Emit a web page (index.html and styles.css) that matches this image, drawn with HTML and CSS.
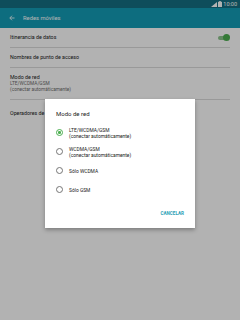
FILE: index.html
```html
<!DOCTYPE html>
<html lang="es">
<head>
  <meta charset="UTF-8">
  <meta name="viewport" content="width=device-width, initial-scale=1.0">
  <title>Redes móviles</title>
  <link rel="stylesheet" href="styles.css">
</head>
<body>
  <div id="screen">
    <div class="status-bar">
      <svg class="signal" width="6" height="5" viewBox="0 0 6 5"><path d="M6 0 L6 5 L0 5 Z" fill="#fff"/></svg>
      <svg class="battery" width="4" height="6" viewBox="0 0 4 6"><rect x="1.2" y="0" width="1.6" height="1" fill="#fff"/><rect x="0" y="0.8" width="4" height="5.2" fill="#fff"/></svg>
      <span class="clock">10:00</span>
    </div>

    <div class="toolbar">
      <svg class="back" width="6" height="6" viewBox="0 0 12 12"><path d="M11 6 H2 M6 1.5 L1.5 6 L6 10.5" stroke="#fff" stroke-width="1.6" fill="none"/></svg>
      <span class="toolbar-title">Redes móviles</span>
    </div>

    <div class="settings-list">
      <div class="setting-row">
        <span class="setting-name">Itinerancia de datos</span>
        <span class="switch"><span class="switch-knob"></span></span>
      </div>
      <div class="setting-row">
        <span class="setting-name">Nombres de punto de acceso</span>
      </div>
      <div class="setting-row tall">
        <div>
          <div class="setting-name">Modo de red</div>
          <div class="setting-sub">LTE/WCDMA/GSM</div>
          <div class="setting-sub">(conectar automáticamente)</div>
        </div>
      </div>
      <div class="setting-row">
        <span class="setting-name">Operadores de red</span>
      </div>
    </div>

    <div class="scrim"></div>

    <div class="dialog">
      <div class="dialog-title">Modo de red</div>
      <div class="options">
        <div class="option">
          <span class="radio checked"></span>
          <span class="option-text">LTE/WCDMA/GSM<br>(conectar automáticamente)</span>
        </div>
        <div class="option">
          <span class="radio"></span>
          <span class="option-text">WCDMA/GSM<br>(conectar automáticamente)</span>
        </div>
        <div class="option">
          <span class="radio"></span>
          <span class="option-text">Sólo WCDMA</span>
        </div>
        <div class="option">
          <span class="radio"></span>
          <span class="option-text">Sólo GSM</span>
        </div>
      </div>
      <div class="dialog-actions">
        <span class="cancel-btn">CANCELAR</span>
      </div>
    </div>
  </div>
</body>
</html>
```

FILE: styles.css
```css
body {
  margin: 0;
  padding: 0;
  font-family: Roboto, "Noto Sans", sans-serif;
  background-color: #fff;
}

#screen {
  position: relative;
  width: 240px;
  height: 320px;
  overflow: hidden;
  background-color: #fff;
}

.status-bar {
  height: 8px;
  background-color: #156f83;
  display: flex;
  align-items: center;
  justify-content: flex-end;
  gap: 1px;
  padding-right: 3px;
}

.clock {
  color: #fff;
  font-size: 5.5px;
  line-height: 8px;
}

.toolbar {
  height: 20px;
  background-color: #149db7;
  display: flex;
  align-items: center;
  padding-left: 9px;
  gap: 8px;
}

.toolbar-title {
  color: #fff;
  font-size: 5.8px;
}

.settings-list {
  padding: 0 10px;
}

.setting-row {
  height: 20px;
  border-bottom: 1px solid #dcdcdc;
  box-sizing: border-box;
  display: flex;
  align-items: center;
  justify-content: space-between;
  color: #212121;
}

.setting-row.tall {
  height: 32px;
}

.setting-row:last-child {
  border-bottom: none;
  height: 26px;
}

.setting-name {
  font-size: 5.3px;
  line-height: 7px;
}

.setting-sub {
  font-size: 4.8px;
  line-height: 5.8px;
  color: #6f6f6f;
}

.switch {
  position: relative;
  width: 11px;
  height: 4px;
  border-radius: 2px;
  background-color: #8bc48b;
  margin-right: 1px;
}

.switch-knob {
  position: absolute;
  right: -1px;
  top: -1.5px;
  width: 7px;
  height: 7px;
  border-radius: 50%;
  background-color: #4caf50;
}

.scrim {
  position: absolute;
  inset: 0;
  background-color: rgba(0, 0, 0, 0.3);
}

.dialog {
  position: absolute;
  left: 45px;
  top: 99px;
  width: 150px;
  height: 129px;
  background-color: #fff;
  box-shadow: 0 2px 4px rgba(0, 0, 0, 0.3);
  box-sizing: border-box;
  padding: 11px 11px 0 11px;
  color: #212121;
}

.dialog-title {
  font-size: 6px;
  line-height: 8px;
  margin-bottom: 5px;
}

.options {
  display: flex;
  flex-direction: column;
}

.option {
  height: 19px;
  display: flex;
  align-items: center;
  gap: 6px;
}

.radio {
  width: 5px;
  height: 5px;
  border: 0.8px solid #757575;
  border-radius: 50%;
  flex-shrink: 0;
  position: relative;
}

.radio.checked {
  border-color: #4caf50;
}

.radio.checked::after {
  content: "";
  position: absolute;
  left: 1.2px;
  top: 1.2px;
  width: 2.6px;
  height: 2.6px;
  border-radius: 50%;
  background-color: #4caf50;
}

.option-text {
  font-size: 4.9px;
  line-height: 6px;
}

.dialog-actions {
  display: flex;
  justify-content: flex-end;
  padding-top: 12px;
}

.cancel-btn {
  font-size: 4.6px;
  font-weight: bold;
  color: #2aa0b6;
}
```
